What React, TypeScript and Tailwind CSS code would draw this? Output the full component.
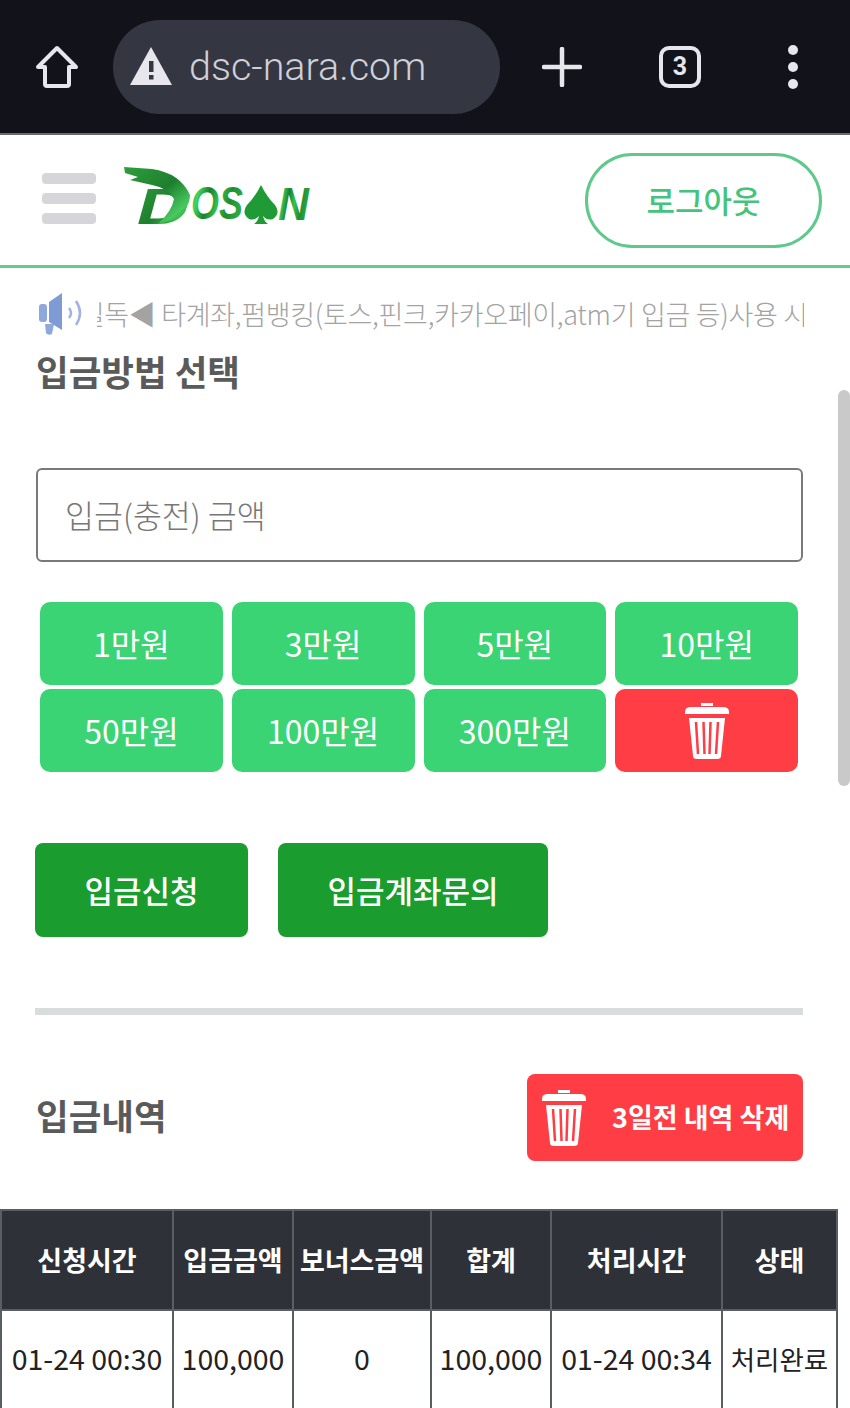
import React from 'react';

const kr = "font-['Noto_Sans_CJK_KR','Noto_Sans',sans-serif]";

const TrashIcon = ({ className }: { className?: string }) => (
  <svg viewBox="0 0 48 60" className={className} fill="none">
    <path d="M18 5 V2 H30 V5" fill="#fff" />
    <path d="M2 11 Q2 6 8 6 H40 Q46 6 46 11 V13 H2 Z" fill="#fff" />
    <path d="M6 17 H42 L38 55 Q38 58 34 58 H14 Q10 58 10 55 Z" fill="#fff" />
    <path d="M13 21 L15 53 M20.5 21 L21.5 53 M27.5 21 L26.5 53 M35 21 L33 53" stroke="#ff3d44" strokeWidth="2.5" />
  </svg>
);

const Logo = () => (
  <svg viewBox="0 0 190 66" className="w-[190px] h-[66px]">
    <defs>
      <linearGradient id="dosanGreen" x1="0" y1="0" x2="1" y2="0.25">
        <stop offset="0" stopColor="#1f9a35" />
        <stop offset="0.2" stopColor="#3fd45f" />
        <stop offset="0.4" stopColor="#1b7f2c" />
        <stop offset="0.6" stopColor="#35c24f" />
        <stop offset="0.8" stopColor="#1f8d33" />
        <stop offset="1" stopColor="#2aa83f" />
      </linearGradient>
      <linearGradient id="dosanBrush" x1="0" y1="0" x2="1" y2="1">
        <stop offset="0" stopColor="#2f9e3c" />
        <stop offset="0.5" stopColor="#1c7f2d" />
        <stop offset="0.8" stopColor="#49c95f" />
        <stop offset="1" stopColor="#1f8f33" />
      </linearGradient>
    </defs>
    <text x="15" y="59" fontFamily="Liberation Sans" fontWeight="700" fontStyle="italic" fontSize="50" fill="url(#dosanBrush)" textLength="52" lengthAdjust="spacingAndGlyphs">D</text>
    {/* brush stroke over the D */}
    <path
      d="M2 2 L30 4 Q58 8 68 30 Q68 44 52 54 L36 59 Q50 46 52 34 Q46 23 30 20 L8 15 L16 12 L3 8 Z"
      fill="url(#dosanBrush)"
    />
    <text x="69" y="54" fontFamily="Liberation Sans" fontWeight="700" fontStyle="italic" fontSize="46" fill="url(#dosanGreen)" textLength="52" lengthAdjust="spacingAndGlyphs">OS</text>
    <path d="M139 20 Q145 32 153 40 Q159 48 151 54 Q145 56 141 51 Q142 56 146 59 H132 Q136 56 137 51 Q133 56 127 54 Q119 48 125 40 Q133 32 139 20 Z" fill="#1f9a35" />
    <text x="156" y="55" fontFamily="Liberation Sans" fontWeight="700" fontStyle="italic" fontSize="46" fill="url(#dosanGreen)" textLength="31" lengthAdjust="spacingAndGlyphs">N</text>
  </svg>
);

const BrowserBar = () => (
  <div className="h-[135px] shrink-0 bg-[#12121a] border-b-2 border-[#6b6b6e] flex items-center text-[#e6e6ec]">
    <svg viewBox="0 0 44 44" className="w-[44px] h-[44px] ml-[35px]" fill="none" stroke="currentColor" strokeWidth="4" strokeLinejoin="round">
      <path d="M22 3 L41 22 H34 V39 Q34 41 32 41 H12 Q10 41 10 39 V22 H3 Z" />
    </svg>
    <div className="ml-[34px] w-[387px] h-[94px] rounded-[47px] bg-[#343741] flex items-center pl-[16px]">
      <svg viewBox="0 0 44 40" className="w-[44px] h-[40px] mb-[2px]">
        <path d="M22 1 L43 39 H1 Z" fill="#e6e6ec" />
        <rect x="20" y="15" width="4.5" height="11" fill="#343741" />
        <rect x="20" y="29" width="4.5" height="4.5" fill="#343741" />
      </svg>
      <span className="ml-[16px] text-[39.5px] leading-none font-['Roboto',sans-serif] font-light text-[#cfd0d8]">dsc-nara.com</span>
    </div>
    <svg viewBox="0 0 40 40" className="w-[40px] h-[40px] ml-[42px]" stroke="currentColor" strokeWidth="4.5" strokeLinecap="round">
      <path d="M20 2 V38 M2 20 H38" />
    </svg>
    <div className="ml-[77px] w-[42px] h-[42px] rounded-[10px] border-[4px] border-[#e6e6ec] flex items-center justify-center text-[25px] font-bold leading-none font-['Roboto',sans-serif]">3</div>
    <div className="ml-[87px] flex flex-col gap-[7px]">
      <div className="w-[10px] h-[10px] rounded-full bg-[#e6e6ec]" />
      <div className="w-[10px] h-[10px] rounded-full bg-[#e6e6ec]" />
      <div className="w-[10px] h-[10px] rounded-full bg-[#e6e6ec]" />
    </div>
  </div>
);

const Header = () => (
  <div className="h-[133px] shrink-0 bg-white border-b-[3px] border-[#62cc8e] flex items-center pl-[42px] pr-[28px]">
    <div className="flex flex-col gap-[9px] w-[54px] mt-[-4px]">
      <div className="h-[11px] rounded-[4px] bg-[#d6d6da]" />
      <div className="h-[11px] rounded-[4px] bg-[#d6d6da]" />
      <div className="h-[11px] rounded-[4px] bg-[#d6d6da]" />
    </div>
    <div className="ml-[26px] mt-[-4px]">
      <Logo />
    </div>
    <button className={`ml-auto w-[237px] h-[95px] rounded-[48px] border-[3px] border-[#5fc98c] text-[31px] font-medium text-[#43c47c] bg-white ${kr}`}>
      로그아웃
    </button>
  </div>
);

const Notice = () => (
  <div className="h-[82px] shrink-0 bg-white flex items-center pl-[38px] pr-[46px] pt-[10px]">
    <svg viewBox="0 0 48 44" className="w-[48px] h-[44px] shrink-0" fill="none">
      <rect x="1" y="12" width="8" height="18" rx="3" fill="#8fa8dc" />
      <path d="M11 10 L24 1 V38 L11 30 Z" fill="#7f9bd6" />
      <path d="M7 32 L16 32 L14 42 Q10 44 8 41 Z" fill="#8fa8dc" />
      <path d="M31 16 Q35 21 31 26" stroke="#9fb4e2" strokeWidth="2.5" />
      <path d="M38 9 Q46 21 38 33" stroke="#9fb4e2" strokeWidth="2.5" />
    </svg>
    <div className="ml-[11px] flex-1 overflow-hidden">
      <div className={`whitespace-nowrap ml-[-44px] tracking-[-0.3px] text-[27px] leading-[40px] font-light text-[#a3a3a3] ${kr}`}>
        ▶필독◀ 타계좌,펌뱅킹(토스,핀크,카카오페이,atm기 입금 등)사용 시 입금이 불가합니다
      </div>
    </div>
  </div>
);

const amounts = ['1만원', '3만원', '5만원', '10만원', '50만원', '100만원', '300만원'];

const rowHead = ['신청시간', '입금금액', '보너스금액', '합계', '처리시간', '상태'];
const rowData = ['01-24 00:30', '100,000', '0', '100,000', '01-24 00:34'];

const DepositTable = () => (
  <table className={`mt-[48px] w-[836px] table-fixed border-collapse border-2 border-[#4a4d52] ${kr}`}>
    <colgroup>
      <col className="w-[172px]" />
      <col className="w-[120px]" />
      <col className="w-[138px]" />
      <col className="w-[120px]" />
      <col className="w-[171px]" />
      <col className="w-[115px]" />
    </colgroup>
    <thead>
      <tr className="h-[100px] bg-[#2e3138]">
        {rowHead.map((h) => (
          <th key={h} className="border-2 border-[#5a5d62] text-[27px] font-bold text-white whitespace-nowrap p-0">{h}</th>
        ))}
      </tr>
    </thead>
    <tbody>
      <tr className="h-[102px] align-middle">
        {rowData.map((d, i) => (
          <td key={i} className="border-2 border-[#5a5d62] text-[28.5px] font-normal text-[#222] text-center whitespace-nowrap p-0 pb-[5px]">{d}</td>
        ))}
        <td className="border-2 border-[#5a5d62] text-[26.5px] font-normal text-[#222] text-center whitespace-nowrap p-0 pb-[5px]">처리완료</td>
      </tr>
    </tbody>
  </table>
);

export default function App() {
  return (
    <div className="relative w-[850px] h-[1408px] overflow-hidden bg-white flex flex-col">
      <BrowserBar />
      <Header />
      <Notice />

      <div className={`flex-1 overflow-hidden bg-white ${kr}`}>
        <div className="pl-[36px] pr-[47px]">
          <h2 className="text-[35.5px] leading-[44px] font-bold text-[#5a5a5a] mt-[-1px]">입금방법 선택</h2>

          <div className="mt-[75px] h-[94px] rounded-[6px] border-2 border-[#77797c] flex items-center pl-[27px] text-[31.5px] font-light text-[#777]">
            입금(충전) 금액
          </div>

          <div className="mt-[40px] pl-[4px] pr-[5px] grid grid-cols-4 gap-x-[9px] gap-y-[4px]">
            {amounts.map((a) => (
              <button key={a} className="h-[83px] pb-[2px] rounded-[10px] bg-[#3bd475] text-white text-[32px] font-normal">
                {a}
              </button>
            ))}
            <button className="h-[83px] rounded-[10px] bg-[#ff3d44] flex items-center justify-center">
              <TrashIcon className="w-[48px] h-[60px]" />
            </button>
          </div>

          <div className="mt-[71px] ml-[-1px] flex gap-[30px]">
            <button className="w-[213px] h-[94px] rounded-[8px] bg-[#1a9c2e] text-white text-[31px] font-medium">입금신청</button>
            <button className="w-[270px] h-[94px] rounded-[8px] bg-[#1a9c2e] text-white text-[31px] font-medium">입금계좌문의</button>
          </div>

          <div className="mt-[71px] ml-[-1px] h-[7px] bg-[#d9dcdc]" />

          <div className="mt-[59px] flex items-center justify-between">
            <h2 className="text-[35.5px] leading-[44px] mt-[-6px] font-bold text-[#5a5a5a]">입금내역</h2>
            <button className="w-[276px] h-[87px] rounded-[8px] bg-[#ff3d44] flex items-center pl-[13px] text-white">
              <TrashIcon className="w-[48px] h-[60px]" />
              <span className="ml-[24px] text-[27px] font-bold whitespace-nowrap">3일전 내역 삭제</span>
            </button>
          </div>
        </div>

        <DepositTable />
      </div>

      {/* scrollbar thumb */}
      <div className="absolute right-0 top-[390px] w-[12px] h-[396px] rounded-[6px] bg-[#c9c9c9]" />
    </div>
  );
}
